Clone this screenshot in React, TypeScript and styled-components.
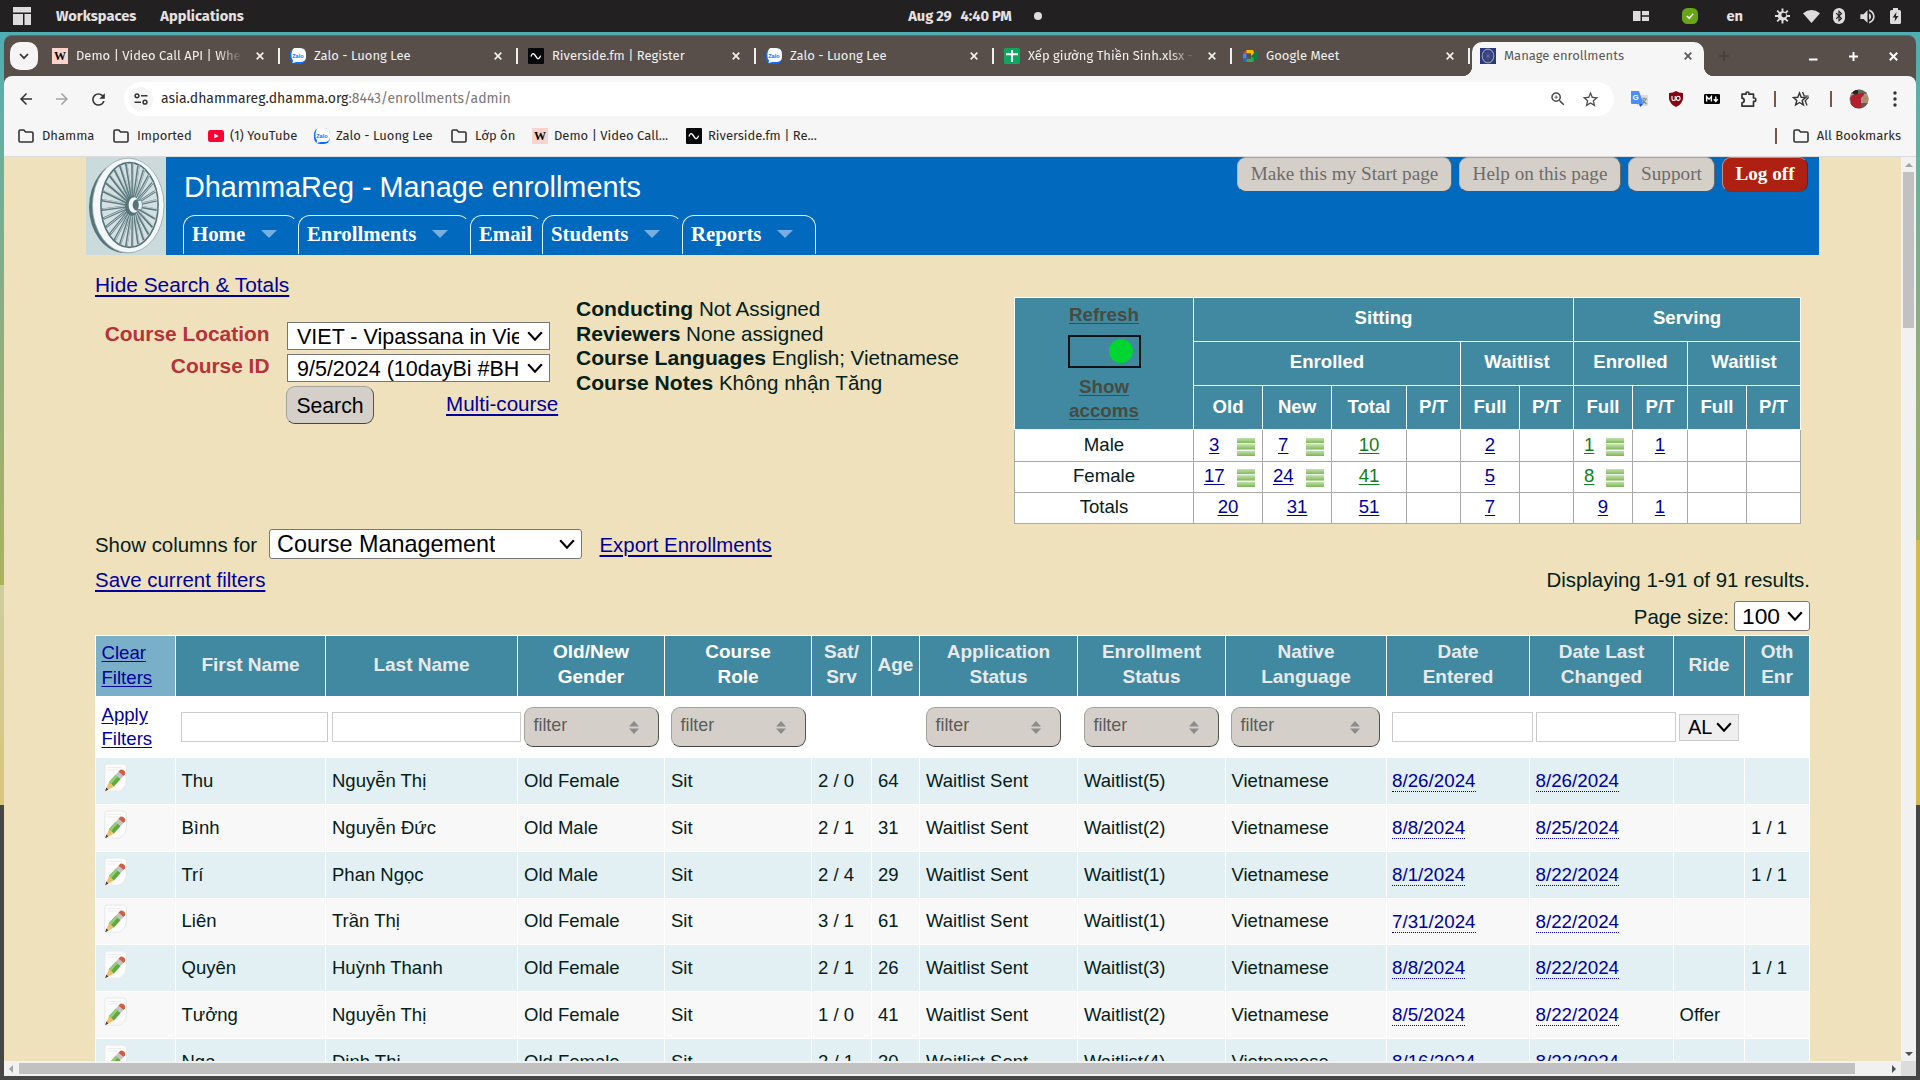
import React from "react";
import styled, { createGlobalStyle, css } from "styled-components";
import {
  MdArrowBack, MdArrowForward, MdRefresh, MdStarBorder, MdOutlineZoomIn, MdVolumeUp,
} from "react-icons/md";

const SANS = '"Liberation Sans", Arial, Helvetica, sans-serif';
const SERIF = '"Liberation Serif", "Times New Roman", serif';
const UI = '"Fira Sans", "Open Sans", "Noto Sans", sans-serif';
const INK = "#04201a";
const LINK = "#00009a";
const TEAL = "#4189a1";

const Global = createGlobalStyle`
  * { box-sizing: border-box; }
  html, body { margin: 0; padding: 0; overflow: hidden; }
  body { font-family: ${SANS}; color: ${INK}; }
`;

const Desktop = styled.div`
  width: 1920px;
  height: 1080px;
  overflow: hidden;
  display: flex;
  flex-direction: column;
  background: #474647;
`;

/* ---------- system bar ---------- */
const SystemBar = styled.header`
  display: grid;
  grid-template-columns: 1fr auto 1fr;
  align-items: center;
  height: 32px;
  background: #232021;
  color: #e4e2e2;
  font: 700 14.67px/32px ${UI};
`;
const SystemLeft = styled.div`
  display: flex;
  align-items: center;
  padding-left: 13px;
  height: 32px;
`;
const SystemItem = styled.span<{ $gap: number }>`
  margin-left: ${(p) => p.$gap}px;
  white-space: pre;
`;
const Clock = styled.div`
  display: flex;
  align-items: center;
  padding-left: 30px;
  gap: 22px;
  white-space: pre;
  word-spacing: -0.6px;
`;
const Dot = styled.i`
  width: 8px;
  height: 8px;
  border-radius: 50%;
  background: #dedcdc;
`;
const SystemRight = styled.div`
  display: flex;
  justify-content: flex-end;
  align-items: center;
  height: 32px;
  padding-right: 18px;
`;
const Slot = styled.span<{ $w: number }>`
  display: inline-flex;
  justify-content: center;
  align-items: center;
  width: ${(p) => p.$w}px;
  flex: none;
`;

/* ---------- wallpaper and window ---------- */
const Wallpaper = styled.div`
  flex: 1;
  padding: 3px 4px 4px;
  background:
    linear-gradient(#474647, #474647) 0 773px / 100% 300px no-repeat,
    linear-gradient(#cdcd9f, #d9c77a) 0 553px / 4px 220px no-repeat,
    linear-gradient(#d0bb4c, #d0bb4c) 1916px 508px / 4px 265px no-repeat,
    linear-gradient(#4dafb3 0, #4dafb3 4px, #5fb0a4 80px, #8fad80 300px, #a9b35c 550px);
`;
const Window = styled.div`
  display: flex;
  flex-direction: column;
  width: 1912px;
  height: 1041px;
  border-radius: 8px 8px 0 0;
  background: #584f4a;
  border-top: 1px solid #6f6560;
  overflow: hidden;
`;
const TabStrip = styled.div`
  display: flex;
  align-items: flex-start;
  height: 40px;
  padding: 6px 0 0 6px;
  flex: none;
`;
const TabMenu = styled.div`
  display: flex;
  align-items: center;
  justify-content: center;
  width: 28px;
  height: 28px;
  margin-right: 6px;
  border-radius: 10px;
  background: #f6f4f5;
`;
const Tab = styled.div<{ $active?: boolean }>`
  position: relative;
  display: flex;
  align-items: center;
  width: ${(p) => (p.$active ? 232 : 238)}px;
  height: ${(p) => (p.$active ? 34 : 28)}px;
  padding: ${(p) => (p.$active ? "0 8px 6px" : "0 1px 0 8px")};
  flex: none;
  color: ${(p) => (p.$active ? "#5c5856" : "#f1efee")};
  background: ${(p) => (p.$active ? "#f6f6f6" : "transparent")};
  border-radius: 10px 10px 0 0;
  font: 400 13px/20px ${UI};
  ${(p) =>
    p.$active &&
    css`
      &::before, &::after {
        content: "";
        position: absolute;
        bottom: 0;
        width: 10px;
        height: 10px;
      }
      &::before { left: -10px; background: radial-gradient(circle at 0 0, transparent 10px, #f6f6f6 10.5px); }
      &::after { right: -10px; background: radial-gradient(circle at 100% 0, transparent 10px, #f6f6f6 10.5px); }
    `}
`;
const TabTitle = styled.span<{ $fade?: boolean }>`
  width: 167px;
  margin-left: 8px;
  overflow: hidden;
  white-space: nowrap;
  ${(p) => p.$fade && css`mask-image: linear-gradient(90deg, #000 85%, transparent);`}
`;
const TabClose = styled.span`
  display: flex;
  width: 16px;
  justify-content: center;
  margin-left: 8.5px;
`;
const TabDivider = styled.i`
  width: 2px;
  height: 16px;
  margin-left: auto;
  margin-right: 1px;
  background: #f2f0ef;
`;
const NewTab = styled.span`
  display: flex;
  align-items: center;
  height: 28px;
  margin-left: 15px;
`;
const WindowButtons = styled.div`
  display: flex;
  align-items: center;
  height: 28px;
  margin-left: auto;
  padding-right: 18px;
`;
const Toolbar = styled.div`
  display: flex;
  align-items: center;
  height: 46px;
  flex: none;
  background: #f6f6f6;
  border-radius: 8px 8px 0 0;
  padding: 0 0 0 4px;
  color: #3a3635;
`;
const UrlPill = styled.div`
  display: flex;
  align-items: center;
  flex: none;
  width: 1490px;
  height: 34px;
  margin-left: 8px;
  padding: 0 8px 0 5px;
  border-radius: 17px;
  background: #fff;
  font: 400 14px/34px ${UI};
  color: #2b2827;
  span.rest { color: #7a7776; }
`;
const SiteInfo = styled.span`
  display: flex;
  align-items: center;
  justify-content: center;
  width: 24px;
  height: 24px;
  margin-right: 8px;
  border-radius: 50%;
  background: #f5f5f5;
`;
const UrlText = styled.div`
  flex: 1;
  white-space: nowrap;
`;
const ToolDivider = styled.i`
  width: 2px;
  height: 16px;
  background: #75584b;
`;
const BookmarkBar = styled.div`
  display: flex;
  align-items: center;
  height: 35px;
  flex: none;
  padding: 0 15px 7px 14px;
  background: #f6f6f6;
  border-bottom: 1px solid #dcdcdc;
  font: 400 13px/20px ${UI};
  color: #2b2827;
`;
const Bookmark = styled.div<{ $w?: number }>`
  display: flex;
  align-items: center;
  flex: none;
  gap: ${(p) => (p.$w && p.$w > 100 ? 6 : 8)}px;
  width: ${(p) => (p.$w ? p.$w + "px" : "auto")};
  white-space: nowrap;
`;
const BookmarkEnd = styled.div`
  display: flex;
  align-items: center;
  gap: 16px;
  margin-left: auto;
`;
const Favicon = styled.span<{ $bg: string }>`
  display: inline-flex;
  align-items: center;
  justify-content: center;
  flex: none;
  width: 16px;
  height: 16px;
  background: ${(p) => p.$bg};
  color: #000;
  font: 700 12px/16px ${SERIF};
`;

/* ---------- page ---------- */
const Viewport = styled.div`
  display: grid;
  grid-template-columns: 1897px 15px;
  grid-template-rows: 904px 15px;
  flex: none;
`;
const Page = styled.main`
  overflow: hidden;
  background: #efe1bc;
`;
const VScroll = styled.div`
  display: flex;
  flex-direction: column;
  align-items: center;
  background: #f1f1f1;
  padding: 6px 0 5px;
`;
const VThumb = styled.i`
  width: 11px;
  height: 156px;
  margin-top: 5px;
  background: #c1c1c1;
`;
const HScroll = styled.div`
  display: flex;
  align-items: center;
  background: #f1f1f1;
  padding: 0 5px;
`;
const HThumb = styled.i`
  width: 1836px;
  height: 11px;
  margin-left: 6px;
  background: #c1c1c1;
`;
const Corner = styled.div`background: #dcdcdc;`;
const Arrow = styled.i<{ $dir: "up" | "down" | "left" | "right"; $c: string }>`
  width: 0;
  height: 0;
  border: 4px solid transparent;
  ${(p) => p.$dir === "up" && css`border-top: 0; border-bottom-color: ${p.$c};`}
  ${(p) => p.$dir === "down" && css`border-bottom: 0; border-top-color: ${p.$c}; margin-top: auto;`}
  ${(p) => p.$dir === "left" && css`border-left: 0; border-right-color: ${p.$c};`}
  ${(p) => p.$dir === "right" && css`border-right: 0; border-left-color: ${p.$c}; margin-left: auto;`}
`;

const Banner = styled.header`
  display: flex;
  width: 1733px;
  height: 98px;
  margin-left: 82px;
  background: #0169be;
`;
const BannerLeft = styled.div`
  display: flex;
  flex-direction: column;
  justify-content: space-between;
  padding: 13px 0 1px 17px;
`;
const Title = styled.h1`
  margin: 0;
  padding-left: 1px;
  font: 400 28.85px/34px ${SANS};
  color: #fff;
`;
const Nav = styled.nav`display: flex;`;
const NavTab = styled.a<{ $w: number }>`
  display: flex;
  align-items: center;
  gap: 16px;
  width: ${(p) => p.$w}px;
  height: 39px;
  padding: 0 0 2px 8px;
  border: 1px solid #e6f0f9;
  border-bottom: 0;
  border-right-color: transparent;
  border-radius: 12px 12px 0 0;
  color: #fff;
  font: 700 20.8px/36px ${SERIF};
  &:last-child { border-right-color: #e6f0f9; }
`;
const NavCaret = styled.i`
  width: 0;
  height: 0;
  margin-bottom: 1px;
  border: 8px solid transparent;
  border-top-color: #76afe0;
  border-bottom: 0;
`;
const BannerButtons = styled.div`
  display: flex;
  gap: 7px;
  margin-left: auto;
  padding-right: 11px;
  height: 35px;
`;
const BannerButton = styled.a<{ $w: number; $danger?: boolean }>`
  width: ${(p) => p.$w}px;
  height: 35px;
  border: 1px solid;
  border-color: ${(p) => (p.$danger ? "#d08a80 #7a1a10 #5c3a36 #d08a80" : "#a9a5a0 #6d6a66 #55524f #b5b1ac")};
  border-radius: 9px;
  background: ${(p) => (p.$danger ? "#ad2012" : "#d5cfc9")};
  color: ${(p) => (p.$danger ? "#fff" : "#6c6c6a")};
  font: ${(p) => (p.$danger ? 700 : 400)} 19.2px/32px ${SERIF};
  text-align: center;
`;

const Content = styled.div`
  width: 1715px;
  margin-left: 91px;
  font-size: 20.5px;
`;
const Link = styled.a`
  color: ${LINK};
  text-decoration: underline;
  text-decoration-thickness: 2px;
  text-underline-offset: 3px;
`;
const TopArea = styled.section`
  display: flex;
  height: 274px;
`;
const SearchPane = styled.div`
  width: 481px;
  padding-top: 18px;
`;
const HideRow = styled.div`
  height: 49px;
  font-size: 20.85px;
  line-height: 24px;
`;
const FormRow = styled.div`
  display: grid;
  grid-template-columns: 174.5px 263px;
  column-gap: 17.5px;
  margin-bottom: 4px;
`;
const Label = styled.label`
  text-align: right;
  font: 700 20.9px/24px ${SANS};
  color: #b6333a;
`;
const Select = styled.div<{ $w: number; $h: number; $size: number; $pad?: number; $radius?: number; $bg?: string; $border?: string }>`
  display: flex;
  align-items: center;
  justify-content: space-between;
  width: ${(p) => p.$w}px;
  height: ${(p) => p.$h}px;
  padding: 0 6px 0 ${(p) => p.$pad ?? 8}px;
  border: 1px solid ${(p) => p.$border || "#767676"};
  border-radius: ${(p) => p.$radius || 0}px;
  background: ${(p) => p.$bg || "#fff"};
  color: #000;
  font: 400 ${(p) => p.$size}px/${(p) => p.$h - 2}px ${SANS};
  span { overflow: hidden; white-space: nowrap; }
`;
const CourseSelect = styled(Select)`
  padding-top: 1px;
  span { margin-right: 8px; }
`;
const ActionRow = styled.div`
  display: flex;
  align-items: center;
  gap: 72px;
  padding-left: 191px;
  height: 38px;
  ${Link} { padding-bottom: 2px; font-size: 20.6px; }
`;
const SearchButton = styled.button`
  width: 88px;
  height: 38px;
  padding: 1px 0 0;
  border: 1px solid;
  border-color: #a5a29e #55534f #45433f #a5a29e;
  border-width: 1px 1.5px 1.5px 1px;
  border-radius: 9px;
  background: #d5cfc9;
  color: #000;
  font: 400 21.2px/34px ${SANS};
`;
const Info = styled.dl`
  width: 438px;
  margin: 0;
  padding-top: 42px;
  line-height: 24.6px;
  font-size: 20.6px;
  div { white-space: nowrap; }
  dt, dd { display: inline; margin: 0; }
  dt { font-weight: 700; font-size: 21.1px; }
`;
const Summary = styled.div`
  width: 787px;
  padding-top: 42px;
  font-size: 18.6px;
`;
const COLS = "178px 68px 68px 74px 53px 58px 53px 58px 54px 58px 53px";
const SummaryHead = styled.div`
  display: grid;
  grid-template-columns: ${COLS};
  grid-template-rows: 43px 43px 43px;
  gap: 1px;
  padding: 1px;
  background: #fff;
`;
const HeadCell = styled.div<{ $span?: number; $low?: boolean }>`
  display: flex;
  align-items: center;
  justify-content: center;
  grid-column: span ${(p) => p.$span || 1};
  padding-bottom: ${(p) => (p.$low ? 1 : 3)}px;
  background: ${TEAL};
  color: #fff;
  font-weight: 700;
`;
const TogglePane = styled.div`
  display: flex;
  flex-direction: column;
  align-items: center;
  grid-row: span 3;
  padding-top: 5px;
  background: ${TEAL};
  color: #464c42;
  font-weight: 700;
  font-size: 18.8px;
  line-height: 24px;
  text-align: center;
  text-decoration: underline;
  text-underline-offset: 2px;
`;
const Toggle = styled.div`
  display: flex;
  justify-content: flex-end;
  align-items: center;
  width: 73px;
  height: 33px;
  margin: 8px 0 7px;
  padding: 0 6px 1px;
  border: 2px solid #0c1416;
  i { width: 24px; height: 24px; border-radius: 50%; background: #00d531; }
`;
const SummaryBody = styled.div`
  display: grid;
  grid-template-columns: ${COLS};
  grid-template-rows: 31px 30px 30px;
  gap: 1px;
  padding: 0 1px 1px;
  background: #a9a9a9;
`;
const BodyCell = styled.div`
  display: flex;
  align-items: center;
  justify-content: center;
  padding-bottom: 2px;
  background: #fff;
`;
const Count = styled.a<{ $green?: boolean }>`
  text-align: center;
  color: ${(p) => (p.$green ? "#108020" : LINK)};
  text-decoration: underline;
  text-underline-offset: 2px;
`;
const StackIcon = styled.i`
  width: 18px;
  height: 18px;
  margin: 4px -2px 0 11.5px;
  background: repeating-linear-gradient(#c3e0ad 0, #93c571 3.6px, #7db659 5px, #f2f8ee 5.2px, #f2f8ee 6.4px);
`;

const ColumnsRow = styled.div`
  display: flex;
  align-items: center;
  height: 30px;
  font-size: 20.4px;
  > ${Link} { padding-top: 2px; }
`;
const ColumnsLabel = styled.span`
  width: 174px;
  padding-top: 2px;
`;
const MidRow = styled.div`
  display: flex;
  justify-content: space-between;
  height: 42px;
  padding-top: 9px;
  font-size: 20.45px;
  line-height: 24px;
`;
const SizeRow = styled.div`
  display: flex;
  justify-content: flex-end;
  align-items: center;
  gap: 5px;
  height: 30px;
  margin-bottom: 4px;
  font-size: 20.4px;
  > span { padding-top: 2px; }
`;

/* ---------- enrollment grid ---------- */
const Grid = styled.section`
  display: flex;
  flex-direction: column;
  padding: 1px;
  width: 1715px;
  background: #fff;
  font-size: 18.5px;
`;
const GridRow = styled.div<{ $h: number; $kind?: "head" | "filter" | "odd" | "even" }>`
  display: grid;
  grid-template-columns: 79px 149px 191px 146px 146px 59px 47px 157px 147px 160px 142px 143px 70px 64px;
  column-gap: 1px;
  height: ${(p) => p.$h}px;
  margin-bottom: ${(p) => (p.$kind === "head" || p.$kind === "filter" ? 0 : 1)}px;
  > * {
    background: ${(p) => (p.$kind === "head" ? TEAL : p.$kind === "odd" ? "#e2eff3" : p.$kind === "even" ? "#f8f8f8" : "transparent")};
  }
`;
const HeadLabel = styled.div<{ $bright?: boolean }>`
  display: flex;
  align-items: center;
  justify-content: center;
  padding-bottom: 4px;
  text-align: center;
  white-space: pre-line;
  color: ${(p) => (p.$bright ? "#fff" : "#e8e9ea")};
  font: 700 19px/25px ${SANS};
`;
const FilterLinks = styled.div<{ $light?: boolean }>`
  padding: ${(p) => (p.$light ? 4 : 7)}px 5.5px 0;
  line-height: ${(p) => (p.$light ? 25 : 24.4)}px;
  font-size: 18.6px;
  color: ${LINK};
  text-decoration: underline;
  text-underline-offset: 2px;
  &&& { background: ${(p) => (p.$light ? "#79afc8" : "transparent")}; }
`;
const FilterCell = styled.div<{ $pad?: number }>`
  display: flex;
  align-items: center;
  padding-left: ${(p) => p.$pad ?? 5}px;
`;
const TextField = styled.input<{ $w: number }>`
  flex: none;
  width: ${(p) => p.$w}px;
  height: 30px;
  border: 1px solid #ccc;
  background: #fff;
`;
const FilterButton = styled.div<{ $w: number }>`
  display: flex;
  align-items: center;
  justify-content: space-between;
  flex: none;
  width: ${(p) => p.$w}px;
  height: 40px;
  padding: 0 19px 0 8.5px;
  border: 1px solid;
  border-color: #a5a29e #55534f #45433f #a5a29e;
  border-radius: 9px;
  background: #d5cfc9;
  color: #5b5b59;
  font: 400 17.8px/34px ${SANS};
  span { padding-bottom: 5px; }
  svg { margin-top: 1px; }
`;
const Cell = styled.div<{ $pad?: number }>`
  display: flex;
  align-items: center;
  padding: 0 0 1px ${(p) => p.$pad ?? 6}px;
  white-space: nowrap;
`;
const IconCell = styled.div`
  padding: 5px 0 0 7px;
`;
const DateLink = styled.a`
  height: 22px;
  line-height: 21px;
  margin-top: 1px;
  font-size: 18.8px;
  color: ${LINK};
  border-bottom: 1px dotted ${LINK};
`;

/* ---------- drawings ---------- */
const Glyph = styled.svg`flex: none;`;
const Chevron = () => (
  <Glyph width="16" height="10.5" viewBox="0 0 15 10">
    <path d="M1 1.2 7.5 8.3 14 1.2" fill="none" stroke="#000" strokeWidth="2" />
  </Glyph>
);
const Cross = ({ c }: { c: string }) => (
  <Glyph width="8" height="8" viewBox="0 0 8 8">
    <path d="M.7 .7 7.3 7.3M7.3 .7 .7 7.3" stroke={c} strokeWidth="1.7" />
  </Glyph>
);
const Folder = () => (
  <Glyph width="16" height="14" viewBox="0 0 16 14">
    <path d="M1 2.2Q1 1 2.2 1H5.8L7.6 3H13.8Q15 3 15 4.2V11.8Q15 13 13.8 13H2.2Q1 13 1 11.8Z" fill="none" stroke="#333" strokeWidth="1.6" />
  </Glyph>
);
const Sorter = () => (
  <Glyph width="10" height="13" viewBox="0 0 10 13">
    <path d="M5 0 10 5.5H0ZM5 13 0 7.5H10Z" fill="#8c8c8c" />
  </Glyph>
);
const Pencil = () => (
  <Glyph width="26" height="29" viewBox="0 0 26 29">
    <path d="M2 2.5Q2 1 4 1H20Q23.5 1 23.5 4V17Q22.5 26 16 28.2H3Q1.5 28 1.5 26Z" fill="#fbfbfb" stroke="#e6e9ea" />
    <path d="M4.5 4.5H18M4.5 7H14" stroke="#ededed" />
    <path d="M2.5 28 6 19.1 11 23.5Z" fill="#f3bd68" />
    <path d="M6 19.1 12.75 11.7 17.65 16.1 11 23.5Z" fill="#62a83e" />
    <path d="M6 19.1 12.75 11.7 14.9 13.6 8.2 21Z" fill="#93cc76" />
    <path d="M12.75 11.7 15.45 8.7 20.35 13.1 17.65 16.1Z" fill="#c3c3c8" />
    <path d="M15.45 8.7 17.2 6.8Q19.6 6 21.9 8.4 22.8 10 22 11.3L20.35 13.1Z" fill="#cf6048" />
    <path d="M2.2 28.3 3.3 24.6 5.4 26.6Z" fill="#4a3f33" />
  </Glyph>
);
const Wheel = () => {
  const spokes = Array.from({ length: 28 }, (_, i) => {
    const a = ((i + 0.5) / 28) * Math.PI * 2;
    return [43.3 + 27.5 * Math.cos(a), 48 + 41.5 * Math.sin(a)];
  });
  return (
    <Glyph width="80" height="98" viewBox="0 0 80 98">
      <rect width="80" height="98" fill="#cbdadb" />
      <ellipse cx="39" cy="50" rx="36" ry="46" fill="#54747a" />
      <ellipse cx="42.2" cy="48.5" rx="35.8" ry="47.3" fill="#f3f7f9" stroke="#8fa5a8" strokeWidth=".8" />
      <ellipse cx="43.5" cy="48" rx="28.6" ry="42.4" fill="#d5e0e2" stroke="#54747a" strokeWidth="1.6" />
      {spokes.map(([x, y], i) => (
        <g key={i}>
          <line x1="47" y1="48.5" x2={x} y2={y} stroke="#5c7a80" strokeWidth="2.5" />
          <line x1="47.5" y1="48" x2={x + 0.8} y2={y - 0.6} stroke="#e8eff0" strokeWidth=".7" />
        </g>
      ))}
      <ellipse cx="46" cy="49" rx="7" ry="10" fill="#54747a" />
      <ellipse cx="48" cy="48" rx="5.4" ry="7.8" fill="#f3f7f9" />
      <ellipse cx="51" cy="48" rx="4.4" ry="5.8" fill="#54747a" />
      <path d="M51.5 43.5H55.5Q57.5 48 55.5 52.5H51.5Q53.5 48 51.5 43.5Z" fill="#e6eef0" stroke="#54747a" strokeWidth=".6" />
    </Glyph>
  );
};

const WFav = () => <Favicon $bg="#fbd3cd">W</Favicon>;
const ZaloFav = () => (
  <Glyph width="16" height="16" viewBox="0 0 16 16">
    <rect width="16" height="16" rx="6" fill="#0a6cff" />
    <path d="M4 0H10Q16 0 16 6V9Q16 14 10 14H6L2.5 15.2 3 12.5Q1 10 1.4 5.5 2 1.5 4 0Z" fill="#fff" />
    <text x="2.2" y="9.6" fontFamily="Liberation Sans" fontWeight="700" fontSize="5.6" fill="#0a6cff">Zalo</text>
  </Glyph>
);
const RiverFav = () => (
  <Glyph width="16" height="16" viewBox="0 0 16 16">
    <rect width="16" height="16" rx="1" fill="#08080a" />
    <path d="M3 8.5Q4.5 4 6.5 6.5L9 10Q11 12 12.6 7.6" fill="none" stroke="#fff" strokeWidth="1.3" />
  </Glyph>
);
const SheetFav = () => (
  <Glyph width="16" height="16" viewBox="0 0 16 16">
    <rect width="16" height="16" rx="1.5" fill="#0ea75f" />
    <path d="M8 2V14M2 6.2H14" stroke="#fff" strokeWidth="1.9" />
  </Glyph>
);
const MeetFav = () => (
  <Glyph width="16" height="16" viewBox="0 0 16 16">
    <path d="M1 5.5 4.5 2V5.5Z" fill="#ea4335" />
    <path d="M4.5 2H10Q11.8 2 11.8 4V7L9 8V5.3H4.5Z" fill="#fbbc04" />
    <path d="M1 5.5H4.5V10.5H1Z" fill="#4285f4" />
    <path d="M1 10.5H4.5V14H2.2Q1 14 1 12.5Z" fill="#1967d2" />
    <path d="M4.5 10.7H9V8L11.8 9V12.4Q11.8 14 10 14H4.5Z" fill="#34a853" />
    <path d="M9 8 14 3.6Q15 3.2 15 4.3V11.8Q15 12.8 14 12.4Z" fill="#0b8043" />
  </Glyph>
);
const WheelFav = () => (
  <Glyph width="16" height="16" viewBox="0 0 16 16">
    <rect width="16" height="16" fill="#2b3580" />
    <ellipse cx="8" cy="8" rx="5.8" ry="6.8" fill="none" stroke="#8f9a9c" strokeWidth="1.2" />
    <path d="M8 2V14M3 8H13M4.5 4 11.5 12M11.5 4 4.5 12" stroke="#69758f" strokeWidth=".7" />
  </Glyph>
);
const YtFav = () => (
  <Glyph width="16" height="12" viewBox="0 0 16 12">
    <rect width="16" height="12" rx="2.5" fill="#ff0033" />
    <path d="M6.3 3.4 10.6 6 6.3 8.6Z" fill="#fff" />
  </Glyph>
);
const TranslateIcon = () => (
  <Glyph width="17" height="16" viewBox="0 0 17 16">
    <rect x="6" y="4" width="11" height="11" rx="1" fill="#dcdcdc" />
    <path d="M10 8H16M13 6.5V8M11 13 15 8.5M11.5 9 15.5 13" stroke="#6d8a96" strokeWidth="1.1" fill="none" />
    <path d="M0 0H8L12.5 13H1Q0 13 0 12Z" fill="#4b8ef5" />
    <path d="M8 13H12L9.5 16Z" fill="#2b4fd0" />
    <text x="1.6" y="9.3" fontFamily="Liberation Sans" fontWeight="700" fontSize="8" fill="#fff">G</text>
  </Glyph>
);
const ShieldIcon = () => (
  <Glyph width="14" height="16" viewBox="0 0 14 16">
    <path d="M7 0Q10 2 14 2V8Q13 13 7 16 1 13 0 8V2Q4 2 7 0Z" fill="#850610" />
    <path d="M3 5V8.2Q3 9.5 4.6 9.5 6.2 9.5 6.2 8.2V5M6.2 9.5V5" stroke="#fff" strokeWidth="1.1" fill="none" />
    <ellipse cx="9.2" cy="7.3" rx="1.9" ry="2.1" stroke="#fff" strokeWidth="1.1" fill="none" />
  </Glyph>
);
const MarkdownIcon = () => (
  <Glyph width="16" height="10" viewBox="0 0 16 10">
    <rect width="16" height="10" rx="1.2" fill="#000" />
    <path d="M2.6 7.6V2.6L5 5.3 7.4 2.6V7.6M11.8 2.4V6.6M9.8 5.2 11.8 7.4 13.8 5.2" fill="none" stroke="#fff" strokeWidth="1.4" />
  </Glyph>
);
const PuzzleIcon = () => (
  <Glyph width="17" height="17" viewBox="0 0 17 17">
    <path d="M2 3.2H6V2.6Q6 1 7.5 1T9 2.6V3.2H13.5V7H14.2Q15.8 7 15.8 8.7T14.2 10.4H13.5V15.2H2V11.8Q4.2 11.5 4.2 9.5T2 7.2Z" fill="none" stroke="#333" strokeWidth="1.7" strokeLinejoin="round" />
  </Glyph>
);
const StarLinesIcon = () => (
  <Glyph width="18" height="17" viewBox="0 0 18 17">
    <path d="M7.5 2 9.2 6.3 13.6 6.6 10.2 9.5 11.4 14 7.5 11.5 3.6 14 4.8 9.5 1.4 6.6 5.8 6.3Z" fill="none" stroke="#333" strokeWidth="1.4" />
    <path d="M10.5 1 12.2 4.8 16.6 5.2M16.6 6.2 13.2 9.8 15 14.6" fill="none" stroke="#333" strokeWidth="1.3" />
  </Glyph>
);
const Avatar = () => (
  <Glyph width="20" height="20" viewBox="0 0 20 20">
    <defs><clipPath id="av"><circle cx="10" cy="10" r="9.6" /></clipPath></defs>
    <g clipPath="url(#av)">
      <rect width="20" height="20" fill="#a09a8c" />
      <rect y="14" width="20" height="6" fill="#5f5a55" />
      <rect width="20" height="5" fill="#5e6d58" />
      <rect x="14" y="7" width="6" height="7" fill="#b08a70" />
      <path d="M1 9Q3 5 8 5L14 3.5 15 6 12 9V19H3Z" fill="#b3202c" />
      <circle cx="6.5" cy="3" r="2.6" fill="#2a2120" />
    </g>
  </Glyph>
);
const BrightnessIcon = () => (
  <Glyph width="15" height="16" viewBox="0 0 16 16">
    <path d="M8 0V4M8 12V16M0 8H4M12 8H16M2.3 2.3 5 5M11 11 13.7 13.7M13.7 2.3 11 5M5 11 2.3 13.7" stroke="#dedcdc" strokeWidth="2" />
    <circle cx="8" cy="8" r="5" fill="#dedcdc" />
    <circle cx="9.4" cy="7" r="2.6" fill="#232021" />
  </Glyph>
);
const BluetoothIcon = () => (
  <Glyph width="12" height="16" viewBox="0 0 12 16">
    <rect width="12" height="16" rx="6" fill="#dedcdc" />
    <path d="M3.2 5.2 8.4 10.4 6 12.6V3.4L8.4 5.6 3.2 10.8" fill="none" stroke="#232021" strokeWidth="1.2" />
  </Glyph>
);

/* ---------- data ---------- */
const TABS: { icon: React.ReactNode; title: string; fade?: boolean }[] = [
  { icon: <WFav />, title: "Demo | Video Call API | Where", fade: true },
  { icon: <ZaloFav />, title: "Zalo - Luong Lee" },
  { icon: <RiverFav />, title: "Riverside.fm | Register" },
  { icon: <ZaloFav />, title: "Zalo - Luong Lee" },
  { icon: <SheetFav />, title: "Xếp giường Thiền Sinh.xlsx -", fade: true },
  { icon: <MeetFav />, title: "Google Meet" },
];
const BOOKMARKS: [React.ReactNode, string, number][] = [
  [<Folder />, "Dhamma", 95],
  [<Folder />, "Imported", 95],
  [<YtFav />, "(1) YouTube", 106],
  [<ZaloFav />, "Zalo - Luong Lee", 137],
  [<Folder />, "Lớp ôn", 81],
  [<WFav />, "Demo | Video Call...", 154],
  [<RiverFav />, "Riverside.fm | Re...", 160],
];
const NAV: [string, number, boolean][] = [
  ["Home", 115, true],
  ["Enrollments", 172, true],
  ["Email", 72, false],
  ["Students", 140, true],
  ["Reports", 134, true],
];
type CountCell = { n: string; green?: boolean; icon?: boolean; narrow?: boolean } | null;
const SUMMARY: { label: string; cells: CountCell[] }[] = [
  { label: "Male", cells: [{ n: "3", icon: true }, { n: "7", icon: true }, { n: "10", green: true }, null, { n: "2" }, null, { n: "1", green: true, icon: true, narrow: true }, { n: "1" }, null, null] },
  { label: "Female", cells: [{ n: "17", icon: true }, { n: "24", icon: true }, { n: "41", green: true }, null, { n: "5" }, null, { n: "8", green: true, icon: true, narrow: true }, null, null, null] },
  { label: "Totals", cells: [{ n: "20" }, { n: "31" }, { n: "51" }, null, { n: "7" }, null, { n: "9" }, { n: "1" }, null, null] },
];
const HEADS: [string, boolean?][] = [
  ["First Name"], ["Last Name"], ["Old/New\nGender", true], ["Course\nRole", true], ["Sat/\nSrv"], ["Age"],
  ["Application\nStatus"], ["Enrollment\nStatus"], ["Native\nLanguage"], ["Date\nEntered"], ["Date Last\nChanged"], ["Ride"], ["Oth\nEnr"],
];
const ROWS: string[][] = [
  ["Thu", "Nguyễn Thị", "Old Female", "2 / 0", "64", "Waitlist(5)", "8/26/2024", "8/26/2024", "", ""],
  ["Bình", "Nguyễn Đức", "Old Male", "2 / 1", "31", "Waitlist(2)", "8/8/2024", "8/25/2024", "", "1 / 1"],
  ["Trí", "Phan Ngọc", "Old Male", "2 / 4", "29", "Waitlist(1)", "8/1/2024", "8/22/2024", "", "1 / 1"],
  ["Liên", "Trần Thị", "Old Female", "3 / 1", "61", "Waitlist(1)", "7/31/2024", "8/22/2024", "", ""],
  ["Quyên", "Huỳnh Thanh", "Old Female", "2 / 1", "26", "Waitlist(3)", "8/8/2024", "8/22/2024", "", "1 / 1"],
  ["Tưởng", "Nguyễn Thị", "Old Female", "1 / 0", "41", "Waitlist(2)", "8/5/2024", "8/22/2024", "Offer", ""],
  ["Nga", "Đinh Thị", "Old Female", "2 / 1", "30", "Waitlist(4)", "8/16/2024", "8/22/2024", "", ""],
];

const Filter = ({ w, pad = 6 }: { w: number; pad?: number }) => (
  <FilterCell $pad={pad}>
    <FilterButton $w={w}><span>filter</span><Sorter /></FilterButton>
  </FilterCell>
);

export default function App() {
  return (
    <Desktop>
      <Global />
      <SystemBar>
        <SystemLeft>
          <Glyph width="18" height="18" viewBox="0 0 18 18">
            <path d="M0 0H18V5.5H0ZM0 7H10V18H0ZM11.5 7H18V18H11.5Z" fill="#dedcdc" />
          </Glyph>
          <SystemItem $gap={25}>Workspaces</SystemItem>
          <SystemItem $gap={24}>Applications</SystemItem>
        </SystemLeft>
        <Clock>{"Aug 29   4:40 PM"}<Dot /></Clock>
        <SystemRight>
          <Glyph width="16" height="10" viewBox="0 0 16 10"><path d="M0 0H7.5V10H0ZM9 0H16V4.3H9ZM9 5.7H16V10H9Z" fill="#dedcdc" /></Glyph>
          <Slot $w={33} />
          <Glyph width="16" height="16" viewBox="0 0 16 16"><rect width="16" height="16" rx="5.5" fill="#65a516" /><path d="M4.8 8 7.2 10.2 11.2 5.8" fill="none" stroke="#fff" strokeWidth="1.6" /></Glyph>
          <Slot $w={28} /><span>en</span>
          <Slot $w={31} />
          <Slot $w={16}><BrightnessIcon /></Slot>
          <Slot $w={42}><Glyph width="17" height="13" viewBox="0 0 17 13"><path d="M8.5 13 0 3.2Q8.5-3.2 17 3.2Z" fill="#dedcdc" /></Glyph></Slot>
          <Slot $w={14}><BluetoothIcon /></Slot>
          <Slot $w={42}><MdVolumeUp size={19} color="#dedcdc" /></Slot>
          <Slot $w={14}>
            <Glyph width="11" height="16" viewBox="0 0 11 16"><path d="M3 0H8V2H9.5Q11 2 11 3.5V14.5Q11 16 9.5 16H1.5Q0 16 0 14.5V3.5Q0 2 1.5 2H3Z" fill="#dedcdc" /><path d="M6.5 4 2.6 9.6H5.2L4.6 13.4 8.5 8H5.9Z" fill="#232021" /></Glyph>
          </Slot>
        </SystemRight>
      </SystemBar>

      <Wallpaper>
        <Window>
          <TabStrip>
            <TabMenu>
              <Glyph width="10" height="7" viewBox="0 0 10 7"><path d="M1 1 5 5.2 9 1" fill="none" stroke="#3a3635" strokeWidth="1.8" /></Glyph>
            </TabMenu>
            {TABS.map((t, i) => (
              <Tab key={i}>
                {t.icon}
                <TabTitle $fade={t.fade}>{t.title}</TabTitle>
                <TabClose><Cross c="#f1efee" /></TabClose>
                <TabDivider />
              </Tab>
            ))}
            <Tab $active>
              <WheelFav />
              <TabTitle>Manage enrollments</TabTitle>
              <TabClose><Cross c="#5c5856" /></TabClose>
            </Tab>
            <NewTab>
              <Glyph width="10" height="10" viewBox="0 0 10 10"><path d="M5 0V10M0 5H10" stroke="#463e3a" strokeWidth="1.5" /></Glyph>
            </NewTab>
            <WindowButtons>
              <Glyph width="9" height="16" viewBox="0 0 9 16"><path d="M0 11.5H8.5" stroke="#fff" strokeWidth="2.2" /></Glyph>
              <Slot $w={31} />
              <Glyph width="9" height="9" viewBox="0 0 9 9"><path d="M4.5 0V9M0 4.5H9" stroke="#fff" strokeWidth="2" /></Glyph>
              <Slot $w={31} />
              <Glyph width="9" height="9" viewBox="0 0 9 9"><path d="M.8 .8 8.2 8.2M8.2 .8 .8 8.2" stroke="#fff" strokeWidth="2" /></Glyph>
            </WindowButtons>
          </TabStrip>

          <Toolbar>
            <Slot $w={36}><MdArrowBack size={18} color="#333" /></Slot>
            <Slot $w={36}><MdArrowForward size={18} color="#a5a3a2" /></Slot>
            <Slot $w={36}><MdRefresh size={19} color="#333" /></Slot>
            <UrlPill>
              <SiteInfo>
                <Glyph width="14" height="12" viewBox="0 0 14 12" fill="none" stroke="#3a3635" strokeWidth="1.5">
                  <circle cx="3" cy="2.8" r="1.9" /><path d="M7 2.8H13.5M.5 9.2H7" /><circle cx="11" cy="9.2" r="1.9" />
                </Glyph>
              </SiteInfo>
              <UrlText>asia.dhammareg.dhamma.org<span className="rest">:8443/enrollments/admin</span></UrlText>
              <Slot $w={32}><MdOutlineZoomIn size={18} color="#4c4948" /></Slot>
              <Slot $w={32}><MdStarBorder size={19} color="#4c4948" /></Slot>
            </UrlPill>
            <Slot $w={7} />
            <Slot $w={37}><TranslateIcon /></Slot>
            <Slot $w={36}><ShieldIcon /></Slot>
            <Slot $w={36}><MarkdownIcon /></Slot>
            <Slot $w={36}><PuzzleIcon /></Slot>
            <Slot $w={17}><ToolDivider /></Slot>
            <Slot $w={36}><StarLinesIcon /></Slot>
            <Slot $w={24}><ToolDivider /></Slot>
            <Slot $w={31}><Avatar /></Slot>
            <Slot $w={41}>
              <Glyph width="4" height="16" viewBox="0 0 4 16" fill="#333"><circle cx="2" cy="2" r="1.7" /><circle cx="2" cy="8" r="1.7" /><circle cx="2" cy="14" r="1.7" /></Glyph>
            </Slot>
          </Toolbar>

          <BookmarkBar>
            {BOOKMARKS.map(([icon, name, w], i) => (
              <Bookmark key={i} $w={w}>{icon}{name}</Bookmark>
            ))}
            <BookmarkEnd>
              <ToolDivider />
              <Bookmark><Folder />All Bookmarks</Bookmark>
            </BookmarkEnd>
          </BookmarkBar>

          <Viewport>
            <Page>
              <Banner>
                <Wheel />
                <BannerLeft>
                  <Title>DhammaReg - Manage enrollments</Title>
                  <Nav>
                    {NAV.map(([name, w, caret]) => (
                      <NavTab key={name} $w={w}>{name}{caret && <NavCaret />}</NavTab>
                    ))}
                  </Nav>
                </BannerLeft>
                <BannerButtons>
                  <BannerButton $w={215}>Make this my Start page</BannerButton>
                  <BannerButton $w={162}>Help on this page</BannerButton>
                  <BannerButton $w={87}>Support</BannerButton>
                  <BannerButton $w={86} $danger>Log off</BannerButton>
                </BannerButtons>
              </Banner>

              <Content>
                <TopArea>
                  <SearchPane>
                    <HideRow><Link>Hide Search &amp; Totals</Link></HideRow>
                    <FormRow>
                      <Label>Course Location</Label>
                      <CourseSelect $w={263} $h={28} $size={21.5} $pad={9}><span>VIET - Vipassana in Vietnam</span><Chevron /></CourseSelect>
                    </FormRow>
                    <FormRow>
                      <Label>Course ID</Label>
                      <CourseSelect $w={263} $h={28} $size={21.5} $pad={9}><span>9/5/2024 (10dayBi #BHT)</span><Chevron /></CourseSelect>
                    </FormRow>
                    <ActionRow>
                      <SearchButton>Search</SearchButton>
                      <Link>Multi-course</Link>
                    </ActionRow>
                  </SearchPane>
                  <Info>
                    <div><dt>Conducting</dt> <dd>Not Assigned</dd></div>
                    <div><dt>Reviewers</dt> <dd>None assigned</dd></div>
                    <div><dt>Course Languages</dt> <dd>English; Vietnamese</dd></div>
                    <div><dt>Course Notes</dt> <dd>Không nhận Tăng</dd></div>
                  </Info>
                  <Summary>
                    <SummaryHead>
                      <TogglePane>
                        <span>Refresh</span>
                        <Toggle><i /></Toggle>
                        <span>Show<br />accoms</span>
                      </TogglePane>
                      <HeadCell $span={6}>Sitting</HeadCell>
                      <HeadCell $span={4}>Serving</HeadCell>
                      <HeadCell $span={4}>Enrolled</HeadCell>
                      <HeadCell $span={2}>Waitlist</HeadCell>
                      <HeadCell $span={2}>Enrolled</HeadCell>
                      <HeadCell $span={2}>Waitlist</HeadCell>
                      {["Old", "New", "Total", "P/T", "Full", "P/T", "Full", "P/T", "Full", "P/T"].map((h, i) => (
                        <HeadCell key={i} $low>{h}</HeadCell>
                      ))}
                    </SummaryHead>
                    <SummaryBody>
                      {SUMMARY.map((r) => (
                        <React.Fragment key={r.label}>
                          <BodyCell>{r.label}</BodyCell>
                          {r.cells.map((c, i) => (
                            <BodyCell key={i}>
                              {c && (c.icon ? (
                                <>
                                  <Slot $w={c.narrow ? 11 : 22}><Count $green={c.green}>{c.n}</Count></Slot>
                                  <StackIcon />
                                </>
                              ) : <Count $green={c.green}>{c.n}</Count>)}
                            </BodyCell>
                          ))}
                        </React.Fragment>
                      ))}
                    </SummaryBody>
                  </Summary>
                </TopArea>

                <ColumnsRow>
                  <ColumnsLabel>Show columns for</ColumnsLabel>
                  <Select $w={313} $h={30} $size={23.4} $pad={7} $radius={3}><span>Course Management</span><Chevron /></Select>
                  <Slot $w={17.5} />
                  <Link>Export Enrollments</Link>
                </ColumnsRow>
                <MidRow>
                  <Link>Save current filters</Link>
                  <span>Displaying 1-91 of 91 results.</span>
                </MidRow>
                <SizeRow>
                  <span>Page size:</span>
                  <Select $w={76} $h={30} $size={22.8} $pad={7} $radius={3}><span>100</span><Chevron /></Select>
                </SizeRow>

                <Grid>
                  <GridRow $h={60} $kind="head">
                    <FilterLinks $light>Clear<br />Filters</FilterLinks>
                    {HEADS.map(([h, bright]) => (
                      <HeadLabel key={h} $bright={bright}>{h}</HeadLabel>
                    ))}
                  </GridRow>
                  <GridRow $h={62} $kind="filter">
                    <FilterLinks>Apply<br />Filters</FilterLinks>
                    <FilterCell><TextField $w={147} /></FilterCell>
                    <FilterCell $pad={5.5}><TextField $w={189} /></FilterCell>
                    <Filter w={135} />
                    <Filter w={135} />
                    <FilterCell />
                    <FilterCell />
                    <Filter w={135} />
                    <Filter w={135} />
                    <Filter w={149} pad={5} />
                    <FilterCell><TextField $w={141} /></FilterCell>
                    <FilterCell $pad={6}><TextField $w={140} /></FilterCell>
                    <FilterCell><Select $w={60} $h={27} $size={20} $bg="#efefef" $border="#ccc"><span>AL</span><Chevron /></Select></FilterCell>
                    <FilterCell />
                  </GridRow>
                  {ROWS.map((r, i) => (
                    <GridRow key={i} $h={i === 3 ? 45 : 46} $kind={i % 2 ? "even" : "odd"}>
                      <IconCell><Pencil /></IconCell>
                      <Cell $pad={5.5}>{r[0]}</Cell>
                      <Cell>{r[1]}</Cell>
                      <Cell>{r[2]}</Cell>
                      <Cell>Sit</Cell>
                      <Cell>{r[3]}</Cell>
                      <Cell>{r[4]}</Cell>
                      <Cell>Waitlist Sent</Cell>
                      <Cell>{r[5]}</Cell>
                      <Cell $pad={5.5}>Vietnamese</Cell>
                      <Cell $pad={5}><DateLink>{r[6]}</DateLink></Cell>
                      <Cell $pad={5.5}><DateLink>{r[7]}</DateLink></Cell>
                      <Cell $pad={5.5}>{r[8]}</Cell>
                      <Cell>{r[9]}</Cell>
                    </GridRow>
                  ))}
                </Grid>
              </Content>
            </Page>
            <VScroll>
              <Arrow $dir="up" $c="#a3a3a3" />
              <VThumb />
              <Arrow $dir="down" $c="#505050" />
            </VScroll>
            <HScroll>
              <Arrow $dir="left" $c="#a3a3a3" />
              <HThumb />
              <Arrow $dir="right" $c="#505050" />
            </HScroll>
            <Corner />
          </Viewport>
        </Window>
      </Wallpaper>
    </Desktop>
  );
}
